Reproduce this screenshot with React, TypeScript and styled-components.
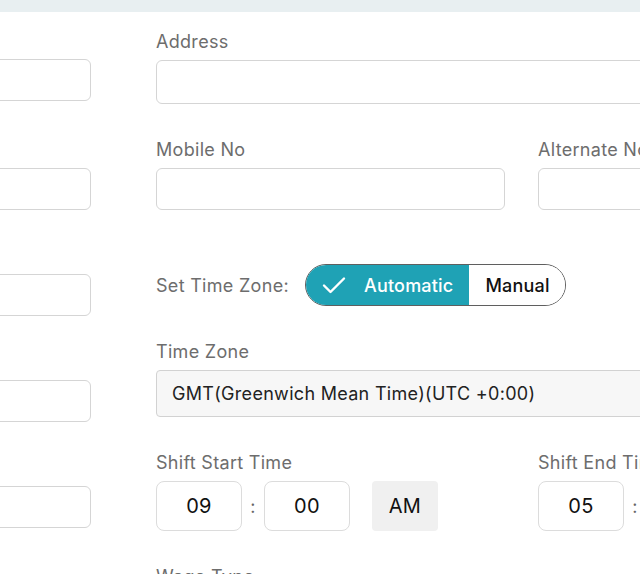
import React from 'react';
import styled, { createGlobalStyle } from 'styled-components';

const GlobalStyle = createGlobalStyle`
	html, body {
		margin: 0;
		padding: 0;
		background: #fff;
		overflow: hidden;
	}
	body {
		font-family: Inter, 'Liberation Sans', sans-serif;
		letter-spacing: 0.3px;
		-webkit-font-smoothing: antialiased;
	}
	* {
		box-sizing: border-box;
	}
`;

const TopBand = styled.div`
	height: 12px;
	background: #e8eff1;
`;

const Page = styled.div`
	display: flex;
	padding-top: 18px;
`;

// only the right edge of this column is on screen
const LeftColumn = styled.div`
	flex: none;
	width: 349px;
	margin-left: -258px;
	margin-right: 65px;
	margin-top: -1px;
	display: flex;
	flex-direction: column;
`;

const MainGrid = styled.div`
	flex: none;
	display: grid;
	grid-template-columns: 349px 349px;
	column-gap: 33px;
	row-gap: 34px;
	align-items: start;
`;

const Field = styled.div<{ $span?: boolean; $gap?: number }>`
	display: flex;
	flex-direction: column;
	grid-column: ${(p) => (p.$span ? '1 / span 2' : 'auto')};
	margin-bottom: ${(p) => (p.$gap !== undefined ? `${p.$gap}px` : '0')};
`;

const Label = styled.label`
	display: block;
	height: 24px;
	font-size: 18px;
	line-height: 24px;
	color: #6d6d6d;
	margin-bottom: 6px;
	white-space: nowrap;
`;

const TextInput = styled.input<{ $height?: number }>`
	width: 100%;
	height: ${(p) => p.$height || 42}px;
	border: 1px solid #d5d5d5;
	border-radius: 6px;
	background: #fff;
	font: inherit;
	font-size: 18px;
	padding: 0 14px;
	outline: none;
`;

const Select = styled.div`
	height: 47px;
	border: 1px solid #d2d2d2;
	border-radius: 4px;
	background: #f7f7f7;
	display: flex;
	align-items: center;
	padding: 0 15px;
	font-size: 18px;
	color: #222;
	white-space: nowrap;
`;

const ZoneRow = styled.div`
	grid-column: 1 / span 2;
	display: flex;
	align-items: center;
	gap: 16px;
	margin-top: 20px;
`;

const ZoneLabel = styled.span`
	font-size: 18px;
	color: #6d6d6d;
`;

const Toggle = styled.div`
	display: flex;
	height: 42px;
	border: 1px solid #5f5f5f;
	border-radius: 21px;
	overflow: hidden;
`;

const Segment = styled.button<{ $active?: boolean }>`
	display: flex;
	align-items: center;
	gap: 18px;
	border: none;
	margin: 0;
	padding: ${(p) => (p.$active ? '0 16px' : '0 15px 0 16px')};
	background: ${(p) => (p.$active ? '#1fa2b5' : '#fff')};
	color: ${(p) => (p.$active ? '#fff' : '#111')};
	font-family: inherit;
	font-size: 18px;
	font-weight: 500;
	letter-spacing: 0.2px;
	cursor: pointer;
`;

const TimeRow = styled.div`
	display: flex;
	align-items: center;
`;

const TimeBox = styled.div`
	width: 86px;
	height: 50px;
	border: 1px solid #dcdcdc;
	border-radius: 8px;
	display: flex;
	align-items: center;
	justify-content: center;
	font-size: 20px;
	color: #111;
`;

const Colon = styled.span`
	width: 22px;
	text-align: center;
	font-size: 18px;
	color: #666;
`;

const Meridiem = styled.div`
	width: 66px;
	height: 50px;
	margin-left: 22px;
	border-radius: 4px;
	background: #f0f0f0;
	display: flex;
	align-items: center;
	justify-content: center;
	font-size: 20px;
	color: #111;
`;

const CheckIcon = () => (
	<svg width="24" height="24" viewBox="0 0 24 24" fill="none">
		<path
			d="M2 12.5l6.5 6.5L22 5.5"
			stroke="#fff"
			strokeWidth="2.4"
			strokeLinecap="round"
			strokeLinejoin="round"
		/>
	</svg>
);

const leftFields = [37, 34, 34, 34, 34];

const App: React.FC = () => {
	return (
		<>
			<GlobalStyle />
			<TopBand />
			<Page>
				<LeftColumn>
					{leftFields.map((gap, i) => (
						<Field key={i} $gap={gap}>
							<Label />
							<TextInput />
						</Field>
					))}
				</LeftColumn>
				<MainGrid>
					<Field $span>
						<Label>Address</Label>
						<TextInput $height={44} />
					</Field>
					<Field>
						<Label>Mobile No</Label>
						<TextInput />
					</Field>
					<Field>
						<Label>Alternate No</Label>
						<TextInput />
					</Field>
					<ZoneRow>
						<ZoneLabel>Set Time Zone:</ZoneLabel>
						<Toggle>
							<Segment $active>
								<CheckIcon />
								Automatic
							</Segment>
							<Segment>Manual</Segment>
						</Toggle>
					</ZoneRow>
					<Field $span>
						<Label>Time Zone</Label>
						<Select>GMT(Greenwich Mean Time)(UTC +0:00)</Select>
					</Field>
					<Field>
						<Label>Shift Start Time</Label>
						<TimeRow>
							<TimeBox>09</TimeBox>
							<Colon>:</Colon>
							<TimeBox>00</TimeBox>
							<Meridiem>AM</Meridiem>
						</TimeRow>
					</Field>
					<Field>
						<Label>Shift End Time</Label>
						<TimeRow>
							<TimeBox>05</TimeBox>
							<Colon>:</Colon>
							<TimeBox>00</TimeBox>
							<Meridiem>PM</Meridiem>
						</TimeRow>
					</Field>
					<Field>
						<Label>Wage Type</Label>
						<TextInput />
					</Field>
				</MainGrid>
			</Page>
		</>
	);
};

export default App;
